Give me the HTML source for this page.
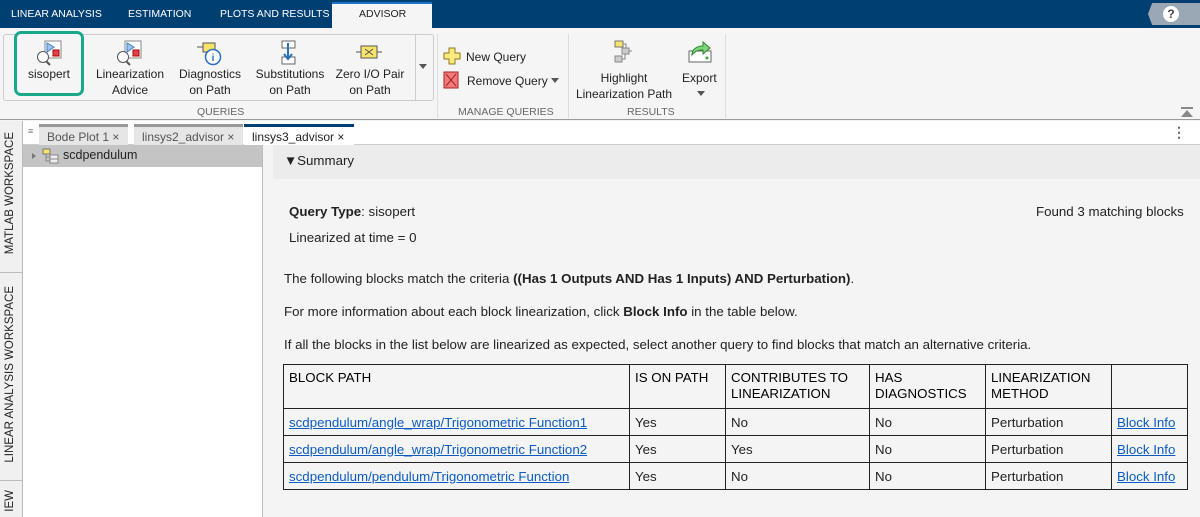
<!DOCTYPE html>
<html><head><meta charset="utf-8"><style>
*{margin:0;padding:0;box-sizing:border-box}
body{width:1200px;height:517px;overflow:hidden;font-family:"Liberation Sans",sans-serif;background:#f4f4f4;position:relative;color:#222}
.a{position:absolute}
.top{left:0;top:0;width:1200px;height:28px;background:#003f72}
.tt{top:8px;color:#fff;font-size:10.5px;white-space:nowrap}
.strip{left:0;top:28px;width:1200px;height:92px;background:#f5f5f5;border-bottom:1px solid #999}
.lbl{font-size:12px;color:#222;text-align:center;line-height:16px;white-space:nowrap}
.grp{font-size:10.5px;color:#666;top:106px}
.tabbar{left:23px;top:121px;width:1177px;height:24px;background:#fff;border-bottom:1px solid #ccc}
.dt{top:124px;height:21px;background:#e6e6e6;font-size:12px;color:#555;padding:3px 0 0 8px;border-top:3px solid #999;white-space:nowrap}
.p{font-size:13.3px;color:#222;white-space:nowrap}
table{position:absolute;left:283px;top:364px;border-collapse:collapse;font-size:13.3px}
td{border:1px solid #222;padding:0 5px;vertical-align:middle;height:27px;white-space:nowrap}
tr.h td{vertical-align:top;height:44px;padding-top:5px;line-height:16px;color:#000}
a{color:#0b5cc2;text-decoration:underline}
.vt{writing-mode:vertical-rl;transform:rotate(180deg);font-size:11.5px;color:#222;white-space:nowrap}
</style></head><body>
<div class="a top"></div>
<div class="a tt" style="left:11px">LINEAR ANALYSIS</div>
<div class="a tt" style="left:128px">ESTIMATION</div>
<div class="a tt" style="left:220px">PLOTS AND RESULTS</div>
<div class="a" style="left:332px;top:2px;width:100px;height:26px;background:#f5f5f5;border-top:2px solid #1a73c7"></div>
<div class="a tt" style="left:359px;color:#222">ADVISOR</div>
<div class="a" style="left:1148px;top:3px;width:52px;height:22px;background:#9aa8b6;clip-path:polygon(8% 0,100% 0,100% 100%,8% 100%,0 50%)"></div>
<div class="a" style="left:1163px;top:6px;width:16px;height:16px;border-radius:50%;background:#fff;color:#444;font-size:12px;font-weight:bold;text-align:center;line-height:16px">?</div>
<div class="a strip"></div>
<div class="a" style="left:3px;top:34px;width:431px;height:67px;border:1px solid #ccc;border-radius:3px"></div>
<div class="a" style="left:14px;top:31px;width:70px;height:65px;border:3px solid #1aa88a;border-radius:7px;background:#f5f5f5"></div>
<svg class="a" style="left:34px;top:39px" width="30" height="28"><rect x="11" y="2" width="16" height="17" fill="#fff" stroke="#888"/><polygon points="13,4 13,13 20,8" fill="#9cc5f0" stroke="#3d7fc7"/><rect x="19" y="11" width="6" height="6" fill="#e0434e" stroke="#a00"/><circle cx="9" cy="18" r="5.5" fill="#fff" stroke="#555"/><line x1="12" y1="22" x2="16" y2="26" stroke="#555" stroke-width="2"/></svg>
<div class="a lbl" style="left:16px;top:66px;width:66px">sisopert</div>
<svg class="a" style="left:114px;top:39px" width="30" height="28"><rect x="11" y="2" width="16" height="17" fill="#fff" stroke="#888"/><polygon points="13,4 13,13 20,8" fill="#9cc5f0" stroke="#3d7fc7"/><rect x="19" y="11" width="6" height="6" fill="#e0434e" stroke="#a00"/><circle cx="9" cy="18" r="5.5" fill="#fff" stroke="#555"/><line x1="12" y1="22" x2="16" y2="26" stroke="#555" stroke-width="2"/></svg>
<div class="a lbl" style="left:90px;top:66px;width:80px">Linearization<br>Advice</div>
<svg class="a" style="left:196px;top:41px" width="30" height="26"><rect x="7" y="2" width="12" height="9" fill="#f7e36b" stroke="#555"/><line x1="1" y1="6" x2="7" y2="6" stroke="#555"/><circle cx="17" cy="16" r="7.5" fill="#fff" stroke="#2c6fbf" stroke-width="1.5"/><text x="17" y="20" font-size="10" font-weight="bold" fill="#2c6fbf" text-anchor="middle">i</text></svg>
<div class="a lbl" style="left:172px;top:66px;width:76px">Diagnostics<br>on Path</div>
<svg class="a" style="left:277px;top:39px" width="26" height="28"><rect x="5" y="2" width="13" height="7" fill="#fff" stroke="#666"/><rect x="5" y="18" width="13" height="7" fill="#fff" stroke="#666"/><path d="M11 4v15M7 15l4 5 4-5" stroke="#2c6fbf" stroke-width="2" fill="none"/></svg>
<div class="a lbl" style="left:250px;top:66px;width:80px">Substitutions<br>on Path</div>
<svg class="a" style="left:355px;top:42px" width="28" height="20"><line x1="1" y1="10" x2="27" y2="10" stroke="#555"/><rect x="6" y="4" width="16" height="12" fill="#f7e36b" stroke="#555"/><path d="M10 7l8 6M18 7l-8 6" stroke="#555"/></svg>
<div class="a lbl" style="left:330px;top:66px;width:80px">Zero I/O Pair<br>on Path</div>
<div class="a" style="left:415px;top:35px;width:1px;height:65px;background:#ccc"></div>
<div class="a" style="left:419px;top:64px;border:4px solid transparent;border-top:5px solid #555"></div>
<div class="a grp" style="left:197px">QUERIES</div>
<div class="a" style="left:437px;top:34px;width:1px;height:84px;background:#ddd"></div>
<svg class="a" style="left:443px;top:47px" width="18" height="18"><path d="M6 1h6v5h5v6h-5v5H6v-5H1V6h5z" fill="#fbe97a" stroke="#8a7a20"/></svg>
<div class="a lbl" style="left:466px;top:49px">New Query</div>
<svg class="a" style="left:443px;top:71px" width="16" height="18"><rect x="1" y="1" width="14" height="16" fill="#f17a7a" stroke="#a22"/><path d="M3 3l10 12M13 3L3 15" stroke="#a22"/></svg>
<div class="a lbl" style="left:467px;top:73px">Remove Query</div>
<div class="a" style="left:551px;top:78px;border:4px solid transparent;border-top:5px solid #555"></div>
<div class="a grp" style="left:458px">MANAGE QUERIES</div>
<div class="a" style="left:568px;top:34px;width:1px;height:84px;background:#ddd"></div>
<svg class="a" style="left:612px;top:39px" width="28" height="26"><rect x="3" y="2" width="8" height="6" fill="#f7e36b" stroke="#777"/><rect x="10" y="9" width="7" height="6" fill="#ccc" stroke="#888"/><rect x="3" y="17" width="7" height="6" fill="#ccc" stroke="#888"/><path d="M11 5h3v4M13 15v5h-3M17 12h3" stroke="#888" fill="none"/></svg>
<div class="a lbl" style="left:574px;top:70px;width:100px">Highlight<br>Linearization Path</div>
<svg class="a" style="left:686px;top:39px" width="28" height="26"><rect x="3" y="12" width="22" height="11" fill="#fff" stroke="#666"/><circle cx="21" cy="19" r="1.5" fill="#3a3"/><path d="M6 16c0-6 5-9 11-9V3l7 6-7 6v-4c-5 0-8 1-11 5z" fill="#7fd37f" stroke="#2a8a2a"/></svg>
<div class="a lbl" style="left:682px;top:70px">Export</div>
<div class="a" style="left:697px;top:91px;border:4px solid transparent;border-top:5px solid #555"></div>
<div class="a grp" style="left:627px">RESULTS</div>
<div class="a" style="left:725px;top:34px;width:1px;height:84px;background:#ddd"></div>
<div class="a" style="left:1181px;top:107px;width:12px;height:2px;background:#888"></div>
<div class="a" style="left:1181px;top:110px;border:6px solid transparent;border-bottom:7px solid #888;border-top:0"></div>
<div class="a" style="left:0;top:121px;width:23px;height:396px;background:#f0f0f0;border-right:1px solid #bbb"></div>
<div class="a" style="left:0;top:272px;width:23px;height:1px;background:#bbb"></div>
<div class="a" style="left:0;top:480px;width:23px;height:1px;background:#bbb"></div>
<div class="a vt" style="left:4px;top:132px">MATLAB WORKSPACE</div>
<div class="a vt" style="left:4px;top:286px">LINEAR ANALYSIS WORKSPACE</div>
<div class="a vt" style="left:4px;top:490px">IEW</div>
<div class="a tabbar"></div>
<div class="a" style="left:28px;top:126px;font-size:9px;color:#777">≡</div>
<div class="a dt" style="left:39px;width:89px">Bode Plot 1 ×</div>
<div class="a dt" style="left:134px;width:109px">linsys2_advisor ×</div>
<div class="a dt" style="left:244px;width:110px;background:#fff;color:#222;border-top-color:#003f72">linsys3_advisor ×</div>
<div class="a" style="left:1172px;top:124px;font-size:14px;color:#666;font-weight:bold">⋮</div>
<div class="a" style="left:23px;top:145px;width:240px;height:372px;background:#fff;border-right:1px solid #bbb"></div>
<div class="a" style="left:23px;top:145px;width:239px;height:22px;background:#c4c4c4"></div>
<div class="a" style="left:32px;top:153px;border:3px solid transparent;border-left:4px solid #777"></div>
<svg class="a" style="left:42px;top:148px" width="18" height="16"><rect x="1" y="1" width="7" height="5" fill="#f7e36b" stroke="#777"/><rect x="8" y="7" width="8" height="4" fill="#eee" stroke="#888"/><rect x="8" y="11" width="8" height="4" fill="#eee" stroke="#888"/><path d="M4 6v7h4M4 9h4" stroke="#888" fill="none"/></svg>
<div class="a" style="left:63px;top:148px;font-size:12.5px">scdpendulum</div>
<div class="a" style="left:273px;top:145px;width:927px;height:34px;background:#ececec"></div>
<div class="a p" style="left:284px;top:153px">▼Summary</div>
<div class="a p" style="left:289px;top:204px"><b>Query Type</b>: sisopert</div>
<div class="a p" style="left:1036px;top:204px">Found 3 matching blocks</div>
<div class="a p" style="left:289px;top:230px">Linearized at time = 0</div>
<div class="a p" style="left:284px;top:271px">The following blocks match the criteria <b>((Has 1 Outputs AND Has 1 Inputs) AND Perturbation)</b>.</div>
<div class="a p" style="left:284px;top:304px">For more information about each block linearization, click <b>Block Info</b> in the table below.</div>
<div class="a p" style="left:284px;top:337px">If all the blocks in the list below are linearized as expected, select another query to find blocks that match an alternative criteria.</div>
<table>
<tr class="h"><td style="width:346px">BLOCK PATH</td><td style="width:96px">IS ON PATH</td><td style="width:144px">CONTRIBUTES TO<br>LINEARIZATION</td><td style="width:116px">HAS<br>DIAGNOSTICS</td><td style="width:126px">LINEARIZATION<br>METHOD</td><td style="width:76px"></td></tr>
<tr><td><a>scdpendulum/angle_wrap/Trigonometric Function1</a></td><td>Yes</td><td>No</td><td>No</td><td>Perturbation</td><td><a>Block Info</a></td></tr>
<tr><td><a>scdpendulum/angle_wrap/Trigonometric Function2</a></td><td>Yes</td><td>Yes</td><td>No</td><td>Perturbation</td><td><a>Block Info</a></td></tr>
<tr><td><a>scdpendulum/pendulum/Trigonometric Function</a></td><td>Yes</td><td>No</td><td>No</td><td>Perturbation</td><td><a>Block Info</a></td></tr>
</table>
</body></html>
